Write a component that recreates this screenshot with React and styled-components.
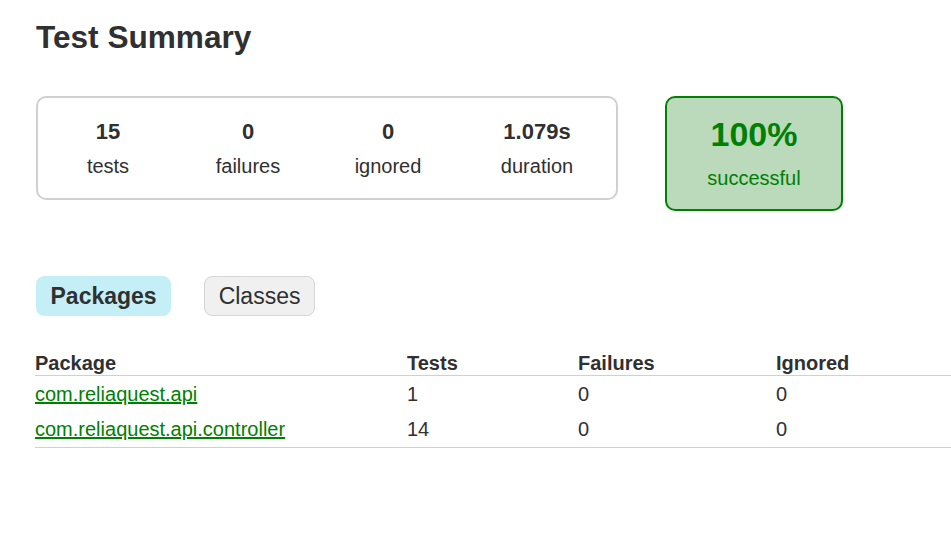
import React from 'react'
import styled, { createGlobalStyle } from 'styled-components'

const GlobalStyle = createGlobalStyle`
  html, body {
    margin: 0;
    padding: 0;
    background: #fff;
    overflow: hidden;
  }
  body {
    font-family: "Liberation Sans", Arial, sans-serif;
    font-size: 20px;
    color: #303030;
  }
`

const Page = styled.div`
  padding: 18px 0 0 36px;
`

const Title = styled.h1`
  margin: 0;
  font-size: 31.6px;
  font-weight: 700;
  line-height: 38px;
  color: #303030;
`

const Summary = styled.div`
  display: flex;
  align-items: flex-start;
  gap: 47px;
  margin-top: 40px;
`

const Group = styled.div`
  display: grid;
  grid-template-columns: 140px 140px 140px 158px;
  border: 2px solid #d0d0d0;
  border-radius: 10px;
  padding: 21px 0 20px;
`

const InfoBox = styled.div`
  text-align: center;
`

const Counter = styled.div`
  font-size: 22px;
  font-weight: 700;
  line-height: 26px;
  margin-bottom: 9px;
`

const Label = styled.div`
  line-height: 24px;
`

const SuccessBox = styled.div`
  width: 174px;
  border: 2px solid #008000;
  border-radius: 10px;
  background: #bbd9bb;
  color: #008000;
  text-align: center;
  padding: 16px 0 19px;
`

const Percent = styled.div`
  font-size: 34px;
  font-weight: 700;
  line-height: 40px;
  margin-bottom: 12px;
`

const Tabs = styled.div`
  display: flex;
  gap: 33px;
  margin-top: 65px;
`

const Tab = styled.div`
  height: 40px;
  box-sizing: border-box;
  display: flex;
  align-items: center;
  padding: 0 13.5px;
  font-size: 23px;
  font-weight: ${p => (p.$active ? 700 : 400)};
  background: ${p => (p.$active ? '#c5eff7' : '#f0f0f0')};
  border: 1px solid ${p => (p.$active ? '#c5eff7' : '#d6d6d6')};
  border-radius: 8px;
`

const Table = styled.table`
  margin-top: 32px;
  margin-left: -1px;
  width: calc(100% + 1px);
  border-collapse: collapse;
  font-size: 20px;
`

const Th = styled.th`
  text-align: left;
  font-weight: 700;
  padding: 3px 0 0;
  line-height: 24px;
  border-bottom: 1px solid #d0d0d0;
  width: ${p => p.$w || 'auto'};
`

const Td = styled.td`
  padding: 6px 0 5px;
  line-height: 24px;
`

const Row = styled.tr`
  &:last-child td {
    padding-bottom: 6px;
    border-bottom: 1px solid #d0d0d0;
  }
`

const Link = styled.a`
  color: #008000;
  text-decoration: underline;
`

const counters = [
  { value: '15', label: 'tests' },
  { value: '0', label: 'failures' },
  { value: '0', label: 'ignored' },
  { value: '1.079s', label: 'duration' },
]

const packages = [
  { name: 'com.reliaquest.api', tests: 1, failures: 0, ignored: 0 },
  { name: 'com.reliaquest.api.controller', tests: 14, failures: 0, ignored: 0 },
]

export default function App() {
  return (
    <Page>
      <GlobalStyle />
      <Title>Test Summary</Title>
      <Summary>
        <Group>
          {counters.map((c, i) => (
            <InfoBox key={i}>
              <Counter>{c.value}</Counter>
              <Label>{c.label}</Label>
            </InfoBox>
          ))}
        </Group>
        <SuccessBox>
          <Percent>100%</Percent>
          <Label>successful</Label>
        </SuccessBox>
      </Summary>
      <Tabs>
        <Tab $active>Packages</Tab>
        <Tab>Classes</Tab>
      </Tabs>
      <Table>
        <thead>
          <tr>
            <Th $w="372px">Package</Th>
            <Th $w="171px">Tests</Th>
            <Th $w="198px">Failures</Th>
            <Th>Ignored</Th>
          </tr>
        </thead>
        <tbody>
          {packages.map(p => (
            <Row key={p.name}>
              <Td><Link href="#">{p.name}</Link></Td>
              <Td>{p.tests}</Td>
              <Td>{p.failures}</Td>
              <Td>{p.ignored}</Td>
            </Row>
          ))}
        </tbody>
      </Table>
    </Page>
  )
}
